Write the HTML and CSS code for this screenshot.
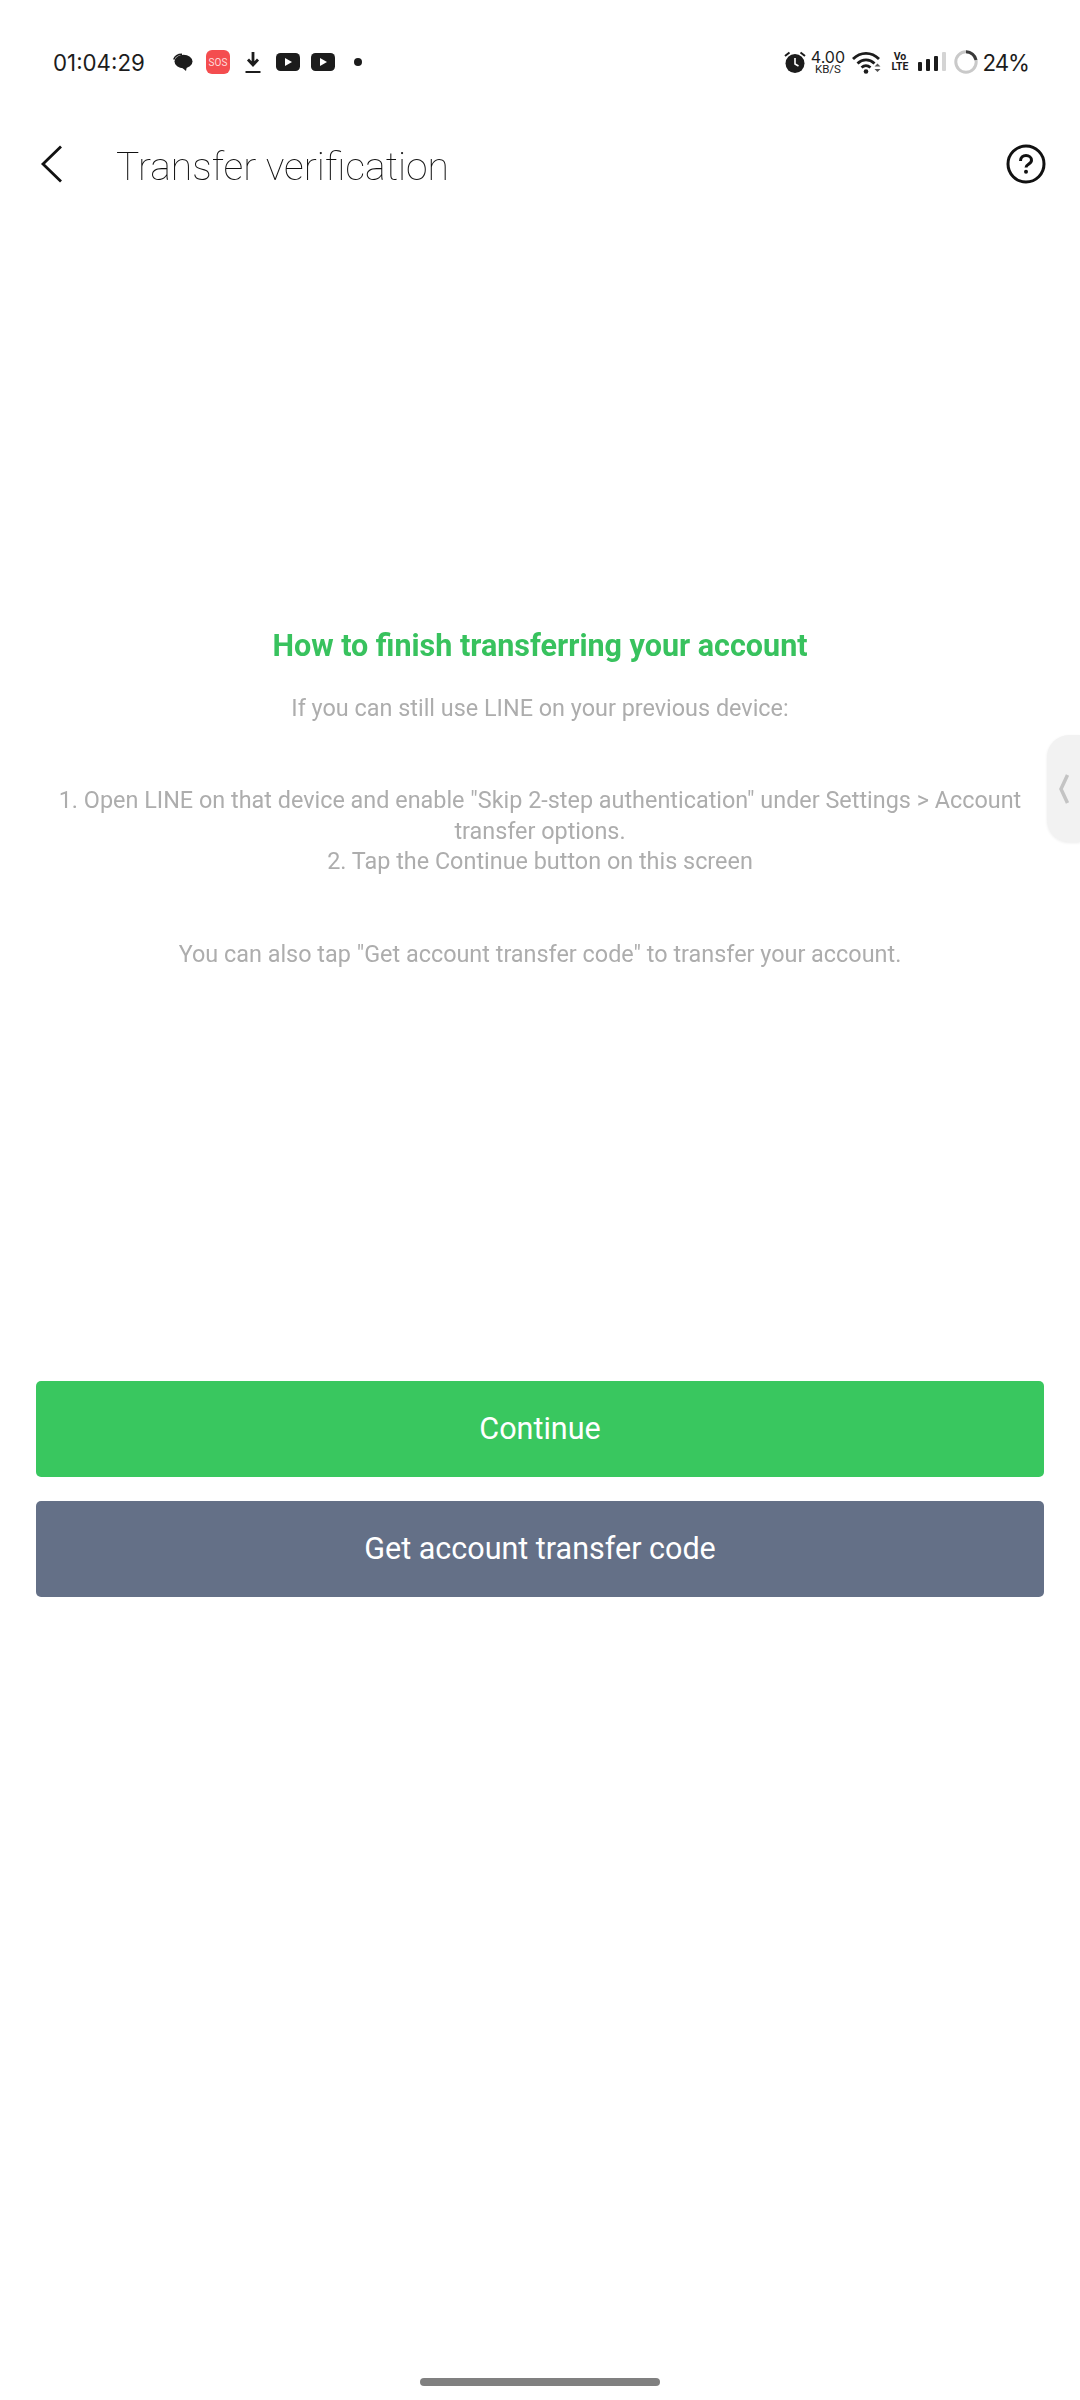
FILE: index.html

```html
<!DOCTYPE html>
<html>
<head>
    <title>Transfer verification</title>
    <link rel="stylesheet" href="styles.css">
</head>
<body>
    <div class="statusbar">
        <div class="status-left">
            <span class="clock">01:04:29</span>
            <svg class="ic-chat" width="20" height="19" viewBox="0 0 20 19"><ellipse cx="10.500" cy="8.500" rx="9" ry="6.800" fill="#1c1c1c"/><path d="M7 13l6 5 1-5z" fill="#1c1c1c"/><path d="M0.800 6.500C2 3 5 1.300 9 1.300" stroke="#1c1c1c" stroke-width="1.600" fill="none"/></svg>
            <span class="sos">SOS</span>
            <svg class="ic-dl" width="16" height="21" viewBox="0 0 16 21"><path d="M8 0v12M3 7.500l5 5.500 5-5.500" stroke="#1c1c1c" stroke-width="2.800" fill="none"/><path d="M0.500 20h15" stroke="#1c1c1c" stroke-width="2"/></svg>
            <svg class="ic-yt" width="24" height="18" viewBox="0 0 24 18"><rect width="24" height="18" rx="4.500" fill="#1c1c1c"/><path d="M9 5v8l7-4z" fill="#fff"/></svg>
            <svg class="ic-yt2" width="24" height="18" viewBox="0 0 24 18"><rect width="24" height="18" rx="4.500" fill="#1c1c1c"/><path d="M9 5v8l7-4z" fill="#fff"/></svg>
            <span class="dot"></span>
        </div>
        <div class="status-right">
            <svg class="ic-alarm" width="22" height="24" viewBox="0 0 22 24"><circle cx="11" cy="13.500" r="9.500" fill="#1c1c1c"/><path d="M11 8v6l3.500 2" stroke="#fff" stroke-width="1.600" fill="none"/><path d="M1 6l4.500-3.500M21 6l-4.500-3.500" stroke="#1c1c1c" stroke-width="2"/></svg>
            <div class="speed"><span class="speed-num">4.00</span><span class="speed-unit">KB/S</span></div>
            <svg class="ic-wifi" width="29" height="23" viewBox="0 0 29 23"><path d="M1 8c7.500-7.500 18.500-7.500 26 0M5.500 12.500c5-4.800 12-4.800 17 0M9.500 16.500c2.900-2.500 6-2.500 9 0" stroke="#1c1c1c" stroke-width="2.800" fill="none"/><circle cx="14" cy="20.500" r="2.300" fill="#1c1c1c"/><path d="M22.500 15.500l3-3 3 3zM22.500 18l3 3 3-3z" fill="#555"/></svg>
            <div class="volte"><span>Vo</span><span>LTE</span></div>
            <svg class="ic-signal" width="28" height="20" viewBox="0 0 28 20"><rect x="0" y="10" width="4" height="9" rx="1" fill="#1c1c1c"/><rect x="8" y="7" width="4" height="12" rx="1" fill="#1c1c1c"/><rect x="16" y="4" width="4" height="15" rx="1" fill="#1c1c1c"/><rect x="24" y="0" width="4" height="19" rx="1" fill="#d4d4d4"/></svg>
            <svg class="ic-batt" width="24" height="24" viewBox="0 0 24 24"><circle cx="12" cy="12" r="10.200" stroke="#c9c9c9" stroke-width="3" fill="none"/><path d="M12 1.800A10.200 10.200 0 0 1 22 10" stroke="#3a3a3a" stroke-width="3" fill="none"/></svg>
            <span class="batt-text">24%</span>
        </div>
    </div>

    <div class="toolbar">
        <svg class="back" width="24" height="38" viewBox="0 0 24 38"><path d="M21 1.500L3 19l18 17.500" stroke="#111" stroke-width="2.800" fill="none"/></svg>
        <h1 class="title">Transfer verification</h1>
        <svg class="help" width="40" height="40" viewBox="0 0 40 40"><circle cx="20" cy="20" r="18" stroke="#111" stroke-width="3" fill="none"/><path d="M14.500 17c0-3.500 2.500-5.500 5.500-5.500s5.500 2 5.500 4.800c0 4-5.500 4-5.500 7.200" stroke="#111" stroke-width="3" fill="none"/><circle cx="20" cy="27.800" r="2" fill="#111"/></svg>
    </div>

    <div class="content">
        <h2 class="heading">How to finish transferring your account</h2>
        <p class="intro">If you can still use LINE on your previous device:</p>
        <p class="steps">1. Open LINE on that device and enable "Skip 2-step authentication" under Settings &gt; Account transfer options.<br>2. Tap the Continue button on this screen</p>
        <p class="also">You can also tap "Get account transfer code" to transfer your account.</p>
    </div>

    <div class="actions">
        <button class="btn btn-green">Continue</button>
        <button class="btn btn-slate">Get account transfer code</button>
    </div>

    <div class="edge-tab">
        <svg width="12" height="32" viewBox="0 0 12 32"><path d="M9.500 2L3 16l6.500 14" stroke="#c4c4c4" stroke-width="3.500" fill="none"/></svg>
    </div>

    <div class="homebar"></div>
</body>
</html>
```

FILE: styles.css

```css
html, body { margin: 0; padding: 0; }
body { position: relative; width: 1080px; height: 2400px; background: #fff; font-family: Roboto, sans-serif; overflow: hidden; }

.statusbar { display: flex; justify-content: space-between; align-items: center; height: 124px; padding: 0 51px 0 53px; box-sizing: border-box; color: #1c1c1c; }
.status-left, .status-right { display: flex; align-items: center; }
.clock { width: 120px; font-family: Inter, sans-serif; font-size: 22.300px; }
.sos { display: flex; align-items: center; justify-content: center; width: 24px; height: 24px; margin-left: 13px; border-radius: 6px; background: #f44d4f; color: #ffd9d9; font-size: 10px; }
.ic-dl { margin-left: 15px; }
.ic-yt { margin-left: 15px; }
.ic-yt2 { margin-left: 11px; }
.dot { width: 8px; height: 8px; margin-left: 19px; border-radius: 50%; background: #1c1c1c; }
.speed { display: flex; flex-direction: column; align-items: center; width: 33px; margin-left: 5px; }
.speed-num { font-family: Inter, sans-serif; font-size: 16px; line-height: 13px; }
.speed-unit { font-size: 11.500px; line-height: 10px; }
.ic-wifi { margin-left: 8px; }
.volte { display: flex; flex-direction: column; align-items: center; width: 15px; margin-left: 11px; font-size: 10.500px; font-weight: 700; line-height: 10px; }
.ic-signal { margin-left: 11px; }
.ic-batt { margin-left: 8px; }
.batt-text { margin-left: 4px; font-family: Inter, sans-serif; font-size: 22.300px; letter-spacing: -1px; }

.toolbar { display: flex; align-items: center; height: 68px; margin-top: 6px; padding: 0 34px 0 40px; will-change: transform; }
.back { flex: none; }
.title { flex: 1; margin: 0 0 0 52px; padding-top: 5px; font-size: 39.100px; font-weight: 150; color: #111; }
.help { flex: none; }

.content { margin-top: 428px; padding: 0 36px; text-align: center; color: #adadad; font-size: 23.400px; line-height: 30.600px; will-change: transform; }
.content p { margin: 0; }
.heading { margin: 0; font-size: 30.500px; font-weight: 700; line-height: 40px; color: #38c25e; }
.intro { padding-top: 26.500px; }
.steps { padding-top: 62px; }
.also { padding-top: 62.500px; }

.actions { display: flex; flex-direction: column; gap: 24px; margin-top: 411px; padding: 0 36px; }
.btn { display: block; width: 100%; height: 96px; border: none; border-radius: 5px; color: #fff; font-family: Roboto, sans-serif; font-size: 30.500px; }
.btn-green { background: #39c75f; }
.btn-slate { background: #647087; }

.edge-tab { position: absolute; top: 735px; right: 0; display: flex; align-items: center; width: 33px; height: 107px; padding-left: 11px; box-sizing: border-box; border-radius: 22px 0 0 22px; background: #f2f2f2; box-shadow: 0 1px 3px rgba(0, 0, 0, 0.08); }
.homebar { position: absolute; left: 420px; top: 2378px; width: 240px; height: 8px; border-radius: 4px; background: #808080; }
```
